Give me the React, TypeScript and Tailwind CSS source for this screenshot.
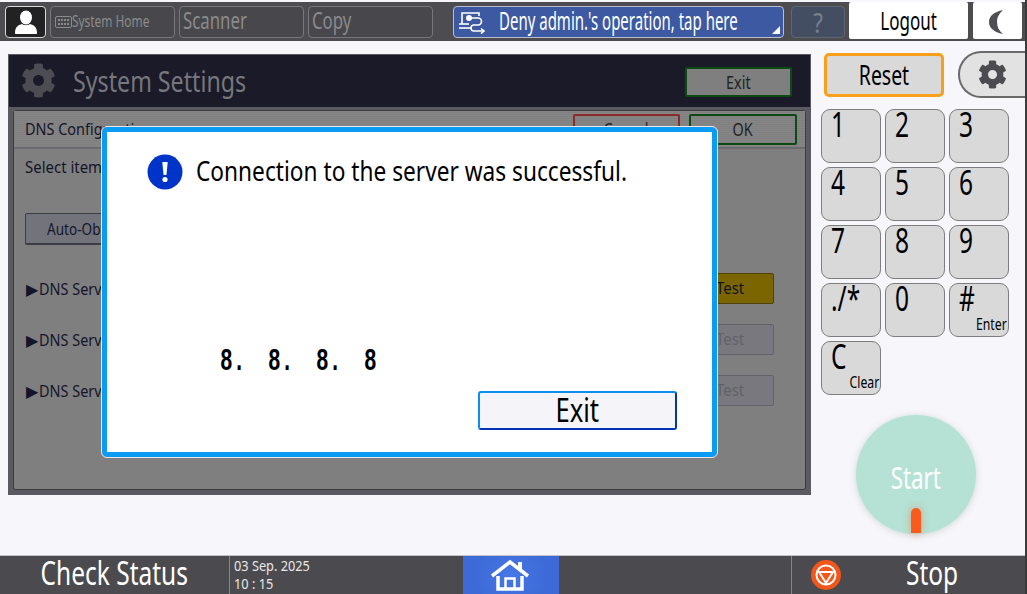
import React from "react";
import { FaCog } from "react-icons/fa";

const font = "[font-family:'Noto_Sans','Open_Sans',sans-serif]";
const narrow = "inline-block whitespace-nowrap scale-x-[0.8]";
const narrowL = "inline-block whitespace-nowrap origin-left scale-x-[0.8]";
const wideL = "inline-block whitespace-nowrap origin-left scale-x-[0.85]";
const tight = "inline-block whitespace-nowrap scale-x-[0.72]";
const tightL = "inline-block whitespace-nowrap origin-left scale-x-[0.7]";

function TabBtn({ label, small }: { label: string; small?: boolean }) {
  return (
    <div className="flex h-[32px] w-[125px] items-center rounded-[4px] border border-[#77777b] bg-[#48484c] pl-[3px] text-[#8a8a8c]">
      {small && (
        <svg width="19" height="14" viewBox="0 0 19 14" className="mr-[-1px] shrink-0" fill="none">
          <rect x="1.5" y="1.5" width="16" height="11" rx="1.5" stroke="#8a8a8c" />
          <g fill="#8a8a8c">
            <rect x="4" y="4" width="2" height="2" /><rect x="7" y="4" width="2" height="2" /><rect x="10" y="4" width="2" height="2" /><rect x="13" y="4" width="2" height="2" />
            <rect x="4" y="8" width="2" height="2" /><rect x="7" y="8" width="2" height="2" /><rect x="10" y="8" width="2" height="2" /><rect x="13" y="8" width="2" height="2" />
          </g>
        </svg>
      )}
      <span className={small ? `${tightL} -translate-y-[1px] text-[17px] leading-[24px]` : `${tightL} -translate-y-[2px] text-[24px] leading-[28px]`}>{label}</span>
    </div>
  );
}

function Key({ main, sub }: { main: string; sub?: string }) {
  return (
    <div className="relative h-[54px] rounded-[9px] border border-[#7d7d7d] bg-[#d9d9d9] pl-[9px] text-black">
      <div className={`${tightL} text-[35px] leading-[28px]`}>{main}</div>
      {sub && <div className="absolute right-[1px] bottom-[3px] origin-right scale-x-[0.72] whitespace-nowrap text-[17px] leading-[18px]">{sub}</div>}
    </div>
  );
}

function DnsRow({ test }: { test: "on" | "off" }) {
  return (
    <div className="flex h-[31px] items-center justify-between pl-[12px] pr-[31px]">
      <span className="flex items-center text-[#15152a]">
        <span className="text-[16px] leading-[20px]">▶</span>
        <span className={`${wideL} ml-[1px] text-[17px] leading-[20px]`}>DNS Server</span>
      </span>
      <div
        className={
          test === "on"
            ? "flex h-[31px] w-[90px] items-center justify-center rounded-[2px] border border-[#50400a] bg-[#7b6500] pl-[2px] text-[#15152a]"
            : "flex h-[31px] w-[90px] items-center justify-center rounded-[2px] border border-[#626268] bg-[#78787e] pl-[2px] text-[#626268]"
        }
      >
        <span className="inline-block -translate-y-[1px] scale-x-[0.88] whitespace-nowrap text-[17px] leading-[20px]">Test</span>
      </div>
    </div>
  );
}

export default function App() {
  return (
    <div className={`relative flex h-[594px] w-[1027px] flex-col overflow-hidden border-r-2 border-[#3a3a3c] bg-[#f7f6fa] ${font}`}>
      {/* top bar */}
      <div className="mt-[2px] flex h-[39px] items-center bg-[#4d4d51] pl-[5px]">
        <div className="flex h-[32px] w-[41px] shrink-0 items-center justify-center rounded-[4px] border border-[#d8d8d8] bg-[#222224]">
          <svg width="26" height="26" viewBox="0 0 26 26" fill="#fff">
            <ellipse cx="13" cy="8.5" rx="6" ry="7" />
            <path d="M2 24c0-6 3-8 7-9 2 1.600 6 1.600 8 0 4 1 7 3 7 9 0 .6-.5 1-1 1H3c-.5 0-1-.4-1-1z" />
          </svg>
        </div>
        <div className="ml-[4px] flex shrink-0 gap-[4px]">
          <TabBtn label="System Home" small />
          <TabBtn label="Scanner" />
          <TabBtn label="Copy" />
        </div>
        <div className="relative ml-[20px] flex h-[32px] w-[331px] shrink-0 items-center rounded-[4px] border border-[#b9bdd0] bg-[#3d59a1] pl-[4px] text-white">
          <svg width="28" height="24" viewBox="0 0 28 24" fill="none" stroke="#fff" strokeWidth="1.6" className="shrink-0">
            <path d="M4 14V3h17v3" />
            <path d="M1 18h13" />
            <path d="M1 14h10" />
            <circle cx="11" cy="8" r="2.2" fill="#fff" />
            <path d="M13 8h7a3.500 3.500 0 0 1 0 7h-4a3 3 0 0 0 0 6h9" />
            <path d="M23 18.500l3 2.500-3 2.500" />
          </svg>
          <span className="ml-[13px] inline-block origin-left -translate-y-[2px] scale-x-[0.6] whitespace-nowrap text-[25px] leading-[30px]">Deny admin.'s operation, tap here</span>
          <div className="absolute right-[3px] bottom-[3px] h-0 w-0 border-b-[8px] border-l-[8px] border-b-white border-l-transparent" />
        </div>
        <div className="ml-[7px] flex h-[32px] w-[54px] shrink-0 items-center justify-center rounded-[4px] border border-[#5f6672] bg-[#444e63] text-[#78808f]">
          <span className={`${narrow} text-[28px] leading-[30px]`}>?</span>
        </div>
        <div className="ml-[4px] flex h-[37px] w-[119px] shrink-0 items-center justify-center self-start rounded-[2px] bg-white text-black">
          <span className="inline-block -translate-y-[1px] scale-x-[0.68] whitespace-nowrap text-[25px] leading-[30px]">Logout</span>
        </div>
        <div className="ml-[5px] flex h-[37px] w-[49px] shrink-0 items-center justify-center self-start rounded-[2px] bg-white">
          <svg width="22" height="30" viewBox="0 0 22 30" fill="#4f4f53" className="-translate-x-[1px]">
            <path d="M17 4C8 6 3 10 3 16s5 10 14 12c-4-3-6-7-6-12S13 8 17 4z" />
          </svg>
        </div>
      </div>

      {/* main */}
      <div className="flex flex-1 items-start">
        {/* settings panel */}
        <div className="ml-[8px] mt-[13px] h-[441px] w-[803px] shrink-0 border-[1px] border-[#5a5a60] bg-[#5a5a60]">
          <div className="flex h-[52px] items-center bg-[#1a1a28] pl-[12px] pr-[18px] pt-[2px]">
            <FaCog className="h-[35px] w-[35px] -translate-y-[2px] text-[#4c4c52]" />
            <span className="ml-[17px] flex-1 -translate-y-[1px] text-[#76767c]">
              <span className={`${narrowL} text-[29px] leading-[36px]`}>System Settings</span>
            </span>
            <div className="flex h-[30px] w-[107px] items-center justify-center rounded-[2px] border-2 border-[#0c4a14] bg-[#7f7f7f] text-[#222]">
              <span className={`${narrow} text-[18px] leading-[22px]`}>Exit</span>
            </div>
          </div>
          <div className="mx-[4px] mt-[3px] h-[380px] rounded-[3px] border border-[#3c3c40] bg-[#7f7f7f]">
            <div className="flex h-[38px] items-center justify-between border-b-2 border-[#6c6c70] bg-[repeating-linear-gradient(0deg,#808080_0px,#808080_1px,#858585_1px,#858585_2px)] pl-[11px] pr-[8px]">
              <span className={`${wideL} text-[17px] leading-[22px] text-[#15152a]`}>DNS Configuration</span>
              <div className="flex gap-[9px]">
                <div className="flex h-[31px] w-[107px] items-center justify-center rounded-[2px] border-2 border-[#8a2a2a] text-[#222]">
                  <span className={`${narrow} text-[18px] leading-[22px]`}>Cancel</span>
                </div>
                <div className="flex h-[31px] w-[108px] items-center justify-center rounded-[2px] border-2 border-[#0c4a14] text-[#222]">
                  <span className={`${narrow} text-[18px] leading-[22px]`}>OK</span>
                </div>
              </div>
            </div>
            <div className="pl-[11px] pt-[6px] leading-[24px] text-[#15152a]">
              <span className="inline-block origin-left scale-x-[0.88] whitespace-nowrap text-[17px]">Select item.</span>
            </div>
            <div className="ml-[11px] mt-[34px] flex h-[32px] w-[200px] items-center rounded-[2px] border border-b-2 border-[#3c3c44] bg-[#73737c] pl-[21px] text-[#15152a]">
              <span className={`${narrowL} text-[17px] leading-[22px]`}>Auto-Obtain DNS</span>
            </div>
            <div className="mt-[28px] flex flex-col gap-[20px]">
              <DnsRow test="on" />
              <DnsRow test="off" />
              <DnsRow test="off" />
            </div>
          </div>
        </div>

        {/* right column */}
        <div className="ml-[10px] w-[204px] shrink-0">
          <div className="mt-[10px] flex items-center">
            <div className="ml-[3px] flex h-[44px] w-[120px] items-center justify-center rounded-[5px] border-[3px] border-[#f9a01b] bg-[#d9d9d9] text-black">
              <span className={`${tight} text-[27px] leading-[32px]`}>Reset</span>
            </div>
            <div className="ml-[14px] flex h-[47px] flex-1 items-center justify-center rounded-l-[23px] border-2 border-r-0 border-[#6a6a6a] bg-[#e2e2e2]">
              <FaCog className="h-[29px] w-[29px] text-[#4c4c50]" />
            </div>
          </div>
          <div className="mt-[11px] grid w-[188px] grid-cols-3 gap-[4px]">
            <Key main="1" /><Key main="2" /><Key main="3" />
            <Key main="4" /><Key main="5" /><Key main="6" />
            <Key main="7" /><Key main="8" /><Key main="9" />
            <Key main="./*" /><Key main="0" /><Key main="#" sub="Enter" />
            <Key main="C" sub="Clear" />
          </div>
          <div className="relative ml-[35px] mt-[20px] flex h-[119px] w-[120px] items-center justify-center rounded-full bg-[#b5e2d5] shadow-[0_1px_6px_rgba(120,160,150,0.35)]">
            <span className={`${tight} translate-y-[2px] text-[31px] leading-[36px] text-white`}>Start</span>
            <div className="absolute bottom-[1px] left-[55px] h-[25px] w-[10px] rounded-t-[5px] bg-[#fb5a1e] shadow-[0_0_8px_rgba(251,90,30,0.45)]" />
          </div>
        </div>
      </div>

      {/* bottom bar */}
      <div className="flex h-[39px] items-stretch border-t border-[#c4c4c4] bg-[#4b4b4f] text-white">
        <div className="flex w-[230px] items-center justify-center border-r border-[#85858a]">
          <span className="inline-block -translate-y-[2px] scale-x-[0.765] whitespace-nowrap text-[32px] leading-[38px]">Check Status</span>
        </div>
        <div className="w-[233px] pl-[4px] text-[15px] leading-[18px] text-[#e8e8e8]">
          <div className="origin-left scale-x-[0.85] whitespace-nowrap">03 Sep. 2025</div>
          <div className="origin-left scale-x-[0.85] whitespace-nowrap">10 : 15</div>
        </div>
        <div className="flex w-[96px] items-center justify-center bg-[radial-gradient(circle,#4577e6_0%,#3d6ad6_70%)]">
          <svg width="40" height="32" viewBox="0 0 40 32" fill="none" stroke="#fff" strokeWidth="3.5" className="-translate-x-[1px]">
            <path d="M2 17L20 3l18 14" />
            <path d="M30 3v7" strokeWidth="4" />
            <path d="M8 17v13h24V17" />
            <path d="M15.500 30V19.500h9V30" strokeWidth="2.500" />
          </svg>
        </div>
        <div className="ml-[232px] flex flex-1 items-center border-l border-[#85858a] pl-[18px]">
          <svg width="32" height="32" viewBox="0 0 32 32" className="shrink-0">
            <circle cx="16" cy="16" r="15" fill="#f2561b" />
            <circle cx="16" cy="16" r="9.500" fill="none" stroke="#fff" strokeWidth="2" />
            <path d="M9 13h14l-7 11z" fill="none" stroke="#fff" strokeWidth="2" />
          </svg>
          <span className="ml-[64px] inline-block origin-left -translate-y-[2px] scale-x-[0.765] whitespace-nowrap text-[32px] leading-[38px]">Stop</span>
        </div>
      </div>

      {/* modal */}
      <div className="absolute left-[102px] top-[127px] h-[330px] w-[615px] rounded-[5px] border-[5px] border-[#0a9bf5] bg-white outline outline-1 outline-[#e8e8e8]">
        <div className="ml-[40px] mt-[21px] flex items-start">
          <svg width="36" height="36" viewBox="0 0 36 36" className="mt-[1px] shrink-0">
            <circle cx="18" cy="18" r="17.500" fill="#0033c8" />
            <path d="M15.300 8h5.400l-1.200 13h-3z" fill="#fff" />
            <circle cx="18" cy="25.500" r="2.600" fill="#fff" />
          </svg>
          <span className="ml-[13px] inline-block origin-left -translate-y-[2px] scale-x-[0.81] whitespace-nowrap text-[28px] leading-[38px] text-black">Connection to the server was successful.</span>
        </div>
        <div className="ml-[113px] mt-[153px] flex text-[32px] font-bold leading-[36px] text-black [font-family:'Liberation_Mono',monospace]">
          <span className="w-[48px] origin-left scale-x-[0.66]">8.</span>
          <span className="w-[48px] origin-left scale-x-[0.66]">8.</span>
          <span className="w-[48px] origin-left scale-x-[0.66]">8.</span>
          <span className="w-[48px] origin-left scale-x-[0.66]">8</span>
        </div>
        <div className="ml-[371px] mt-[11px] flex h-[39px] w-[199px] items-center justify-center rounded-[3px] border-2 border-[#0a8ff0] border-b-[#0033b5] border-r-[#0033b5] bg-[#f5f4f8] text-black">
          <span className={`${narrow} -translate-y-[1px] text-[32px] leading-[36px]`}>Exit</span>
        </div>
      </div>
    </div>
  );
}
